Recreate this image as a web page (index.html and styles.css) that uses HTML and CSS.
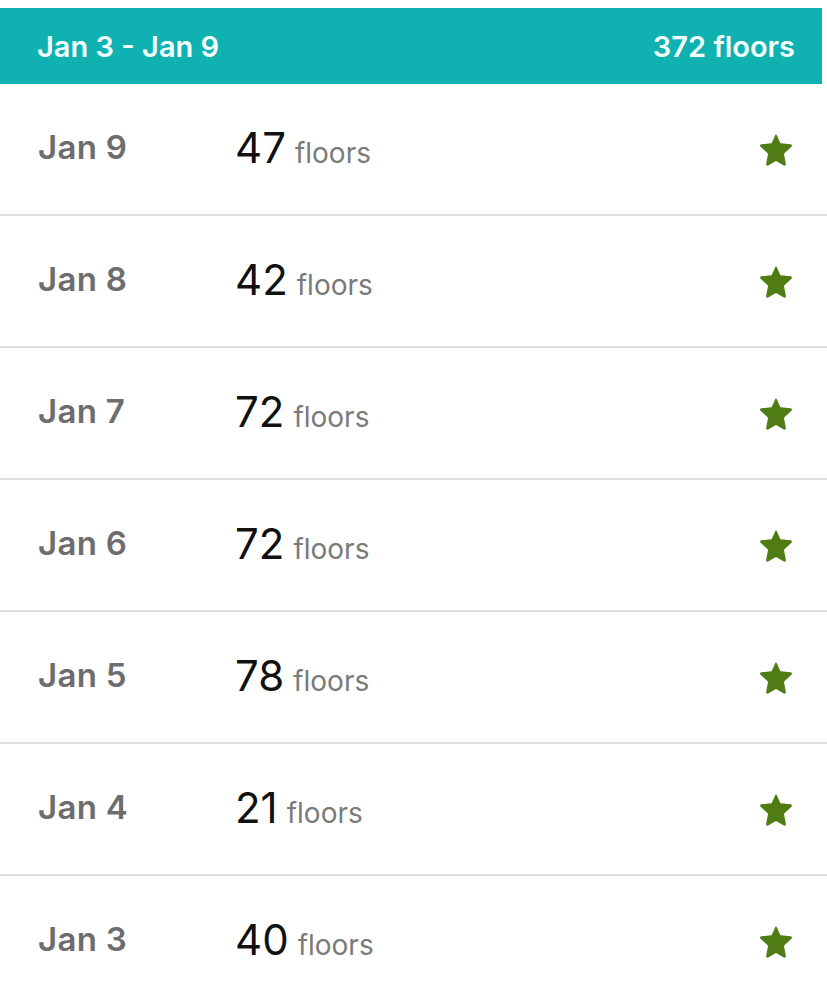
FILE: index.html
```html
<!DOCTYPE html>
<html>
<head>
<meta charset="utf-8">
<link rel="stylesheet" href="styles.css">
</head>
<body>
<div class="page">
  <div class="topgap"></div>
  <header class="week">
    <span class="week-range">Jan 3 - Jan 9</span>
    <span class="week-total">372 floors</span>
  </header>
  <ul class="days">
    <li class="day"><span class="date">Jan 9</span><span class="count"><span class="num">47</span><span class="unit">floors</span></span><svg class="star" viewBox="0 0 24 24"><path d="M12 1.8l3 6.3 6.8.8c.8.1 1.1 1.1.5 1.6l-5 4.7 1.3 6.8c.2.8-.7 1.4-1.4 1l-5.2-3-5.2 3c-.7.4-1.6-.2-1.4-1l1.3-6.8-5-4.7c-.6-.5-.3-1.5.5-1.6l6.8-.8z"/></svg></li>
    <li class="day"><span class="date">Jan 8</span><span class="count"><span class="num">42</span><span class="unit">floors</span></span><svg class="star" viewBox="0 0 24 24"><path d="M12 1.8l3 6.3 6.8.8c.8.1 1.1 1.1.5 1.6l-5 4.7 1.3 6.8c.2.8-.7 1.4-1.4 1l-5.2-3-5.2 3c-.7.4-1.6-.2-1.4-1l1.3-6.8-5-4.7c-.6-.5-.3-1.5.5-1.6l6.8-.8z"/></svg></li>
    <li class="day"><span class="date">Jan 7</span><span class="count"><span class="num">72</span><span class="unit">floors</span></span><svg class="star" viewBox="0 0 24 24"><path d="M12 1.8l3 6.3 6.8.8c.8.1 1.1 1.1.5 1.6l-5 4.7 1.3 6.8c.2.8-.7 1.4-1.4 1l-5.2-3-5.2 3c-.7.4-1.6-.2-1.4-1l1.3-6.8-5-4.7c-.6-.5-.3-1.5.5-1.6l6.8-.8z"/></svg></li>
    <li class="day"><span class="date">Jan 6</span><span class="count"><span class="num">72</span><span class="unit">floors</span></span><svg class="star" viewBox="0 0 24 24"><path d="M12 1.8l3 6.3 6.8.8c.8.1 1.1 1.1.5 1.6l-5 4.7 1.3 6.8c.2.8-.7 1.4-1.4 1l-5.2-3-5.2 3c-.7.4-1.6-.2-1.4-1l1.3-6.8-5-4.7c-.6-.5-.3-1.5.5-1.6l6.8-.8z"/></svg></li>
    <li class="day"><span class="date">Jan 5</span><span class="count"><span class="num">78</span><span class="unit">floors</span></span><svg class="star" viewBox="0 0 24 24"><path d="M12 1.8l3 6.3 6.8.8c.8.1 1.1 1.1.5 1.6l-5 4.7 1.3 6.8c.2.8-.7 1.4-1.4 1l-5.2-3-5.2 3c-.7.4-1.6-.2-1.4-1l1.3-6.8-5-4.7c-.6-.5-.3-1.5.5-1.6l6.8-.8z"/></svg></li>
    <li class="day"><span class="date">Jan 4</span><span class="count"><span class="num">21</span><span class="unit">floors</span></span><svg class="star" viewBox="0 0 24 24"><path d="M12 1.8l3 6.3 6.8.8c.8.1 1.1 1.1.5 1.6l-5 4.7 1.3 6.8c.2.8-.7 1.4-1.4 1l-5.2-3-5.2 3c-.7.4-1.6-.2-1.4-1l1.3-6.8-5-4.7c-.6-.5-.3-1.5.5-1.6l6.8-.8z"/></svg></li>
    <li class="day"><span class="date">Jan 3</span><span class="count"><span class="num">40</span><span class="unit">floors</span></span><svg class="star" viewBox="0 0 24 24"><path d="M12 1.8l3 6.3 6.8.8c.8.1 1.1 1.1.5 1.6l-5 4.7 1.3 6.8c.2.8-.7 1.4-1.4 1l-5.2-3-5.2 3c-.7.4-1.6-.2-1.4-1l1.3-6.8-5-4.7c-.6-.5-.3-1.5.5-1.6l6.8-.8z"/></svg></li>
  </ul>
</div>
</body>
</html>
```

FILE: styles.css
```css
* { box-sizing: border-box; }
html, body { margin: 0; padding: 0; background: #fff; }
body { font-family: Inter, "Open Sans", "Liberation Sans", sans-serif; overflow: hidden; }
.page { width: 827px; height: 999px; overflow: hidden; }
.topgap { height: 8px; }
.week {
  height: 76px;
  margin-right: 5px;
  background: #0fb1b1;
  color: #f4ffff;
  display: flex;
  align-items: center;
  justify-content: space-between;
  padding: 0 27px 0 37px;
  font-size: 29px;
  font-weight: 600;
}
.days { list-style: none; margin: 0; padding: 0; }
.day {
  height: 132px;
  border-bottom: 2px solid #dedede;
  display: grid;
  grid-template-columns: 197px 1fr auto;
  align-items: center;
  padding: 0 33px 0 38px;
}
.date {
  font-size: 33px;
  font-weight: 600;
  color: #6d6d6d;
  letter-spacing: 0.3px;
  margin-top: -4px;
}
.count { display: flex; align-items: baseline; gap: 9px; margin-top: -4px; }
.num { font-size: 42px; color: #111; font-weight: 400; }
.unit { font-size: 28px; color: #7a7a7a; }
.star { width: 36px; height: 36px; fill: #4f7d13; }
```
